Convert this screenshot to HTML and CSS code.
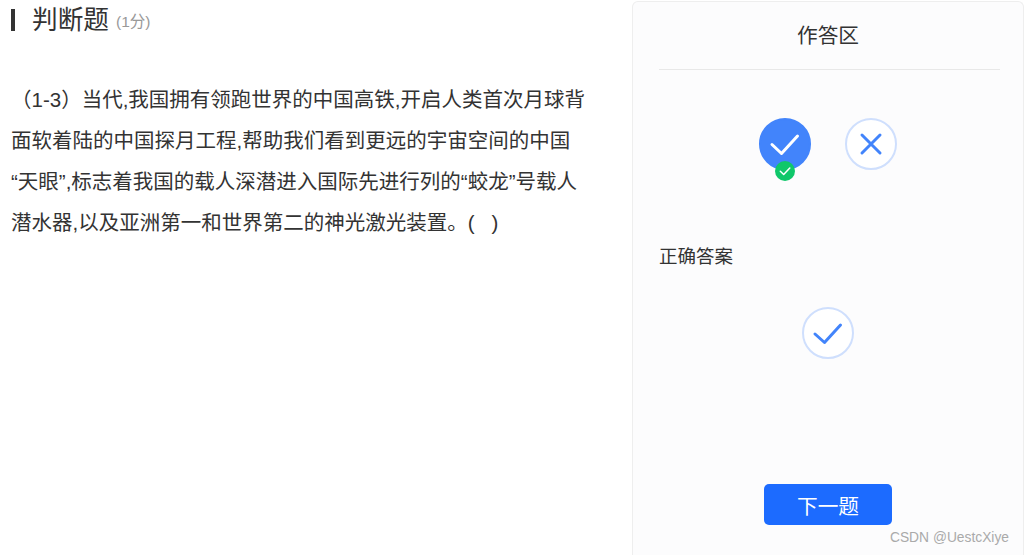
FILE: index.html
```html
<!DOCTYPE html>
<html lang="zh-CN">
<head>
<meta charset="utf-8">
<title>判断题</title>
<link rel="stylesheet" href="styles.css">
</head>
<body>
<div class="page">
  <main class="question">
    <h1 class="heading"><span class="heading-title">判断题</span><span class="heading-score">(1分)</span></h1>
    <p class="stem">（1-3）当代,我国拥有领跑世界的中国高铁,开启人类首次月球背面软着陆的中国探月工程,帮助我们看到更远的宇宙空间的中国“天眼”,标志着我国的载人深潜进入国际先进行列的“蛟龙”号载人潜水器,以及亚洲第一和世界第二的神光激光装置。(&nbsp;&nbsp;&nbsp;)</p>
  </main>
  <aside class="panel">
    <h2 class="panel-title">作答区</h2>
    <div class="options">
      <div class="choice choice-selected">
        <svg class="glyph" viewBox="0 0 52 52"><path d="M13 26.500L22.500 35.500L38.500 18" fill="none" stroke="#fff" stroke-width="3" stroke-linecap="round" stroke-linejoin="round"/></svg>
        <svg class="badge" viewBox="0 0 20 20"><circle cx="10" cy="10" r="10" fill="#0fc76a"/><path d="M5.300 10.300L8.700 13.500L14.800 7" fill="none" stroke="#fff" stroke-width="1.500" stroke-linecap="round" stroke-linejoin="round"/></svg>
      </div>
      <div class="choice">
        <svg class="glyph" viewBox="0 0 52 52"><path d="M17 17L35 35M35 17L17 35" fill="none" stroke="#4284fb" stroke-width="3" stroke-linecap="round"/></svg>
      </div>
    </div>
    <h3 class="answer-label">正确答案</h3>
    <div class="answer">
      <div class="choice">
        <svg class="glyph" viewBox="0 0 52 52"><path d="M13 27L22.500 35.500L38.500 18" fill="none" stroke="#4284fb" stroke-width="3" stroke-linecap="round" stroke-linejoin="round"/></svg>
      </div>
    </div>
    <div class="actions"><button class="next" type="button">下一题</button></div>
  </aside>
</div>
<div class="watermark">CSDN @UestcXiye</div>
</body>
</html>
```
FILE: styles.css
```css
* { box-sizing: border-box; }
html, body { margin: 0; height: 555px; overflow: hidden; background: #fff; }
body {
  position: relative;
  font-family: "Liberation Sans", "Noto Sans CJK SC", sans-serif;
  color: #333;
}
.page { display: flex; height: 555px; }
.question { width: 632px; padding-left: 11px; flex: none; }
.heading {
  margin: 9px 0 0;
  height: 22px;
  display: flex;
  align-items: center;
  border-left: 4px solid #333;
  padding-left: 17px;
  font-weight: 400;
  line-height: 22px;
}
.heading-title { font-size: 25.700px; color: #333; }
.heading-score { font-size: 15.500px; color: #999; margin-left: 7px; position: relative; top: 2px; }
.stem {
  margin: 48px 0 0;
  width: 585px;
  font-size: 20.500px;
  line-height: 41px;
  color: #333;
}
.panel {
  width: 392px;
  flex: none;
  margin-top: 1px;
  height: 554px;
  padding: 0 23px 0 26px;
  background: #fcfcfd;
  border: 1px solid #eee;
  border-bottom: 0;
  border-radius: 6px 6px 0 0;
  display: flex;
  flex-direction: column;
}
.panel-title {
  margin: 0;
  height: 68px;
  padding: 22px 3px 0 0;
  border-bottom: 1px solid #e8e8e8;
  text-align: center;
  font-size: 20.700px;
  font-weight: 400;
  line-height: 24px;
}
.options { display: flex; justify-content: center; gap: 34px; margin-top: 48px; padding-right: 3px; }
.choice {
  position: relative;
  width: 52px;
  height: 52px;
  border-radius: 50%;
  border: 2px solid #cfdffd;
  background: #fff;
}
.choice-selected { background: #4284fb; border-color: #4284fb; }
.glyph { position: absolute; left: -2px; top: -2px; width: 52px; height: 52px; display: block; }
.badge { position: absolute; left: 14px; top: 41px; width: 20px; height: 20px; display: block; }
.answer-label {
  margin: 75px 0 0;
  font-size: 18.500px;
  font-weight: 400;
  line-height: 24px;
}
.answer { display: flex; justify-content: center; margin-top: 38px; padding-right: 3px; }
.actions { display: flex; justify-content: center; margin-top: 125px; padding-right: 3px; }
.next {
  width: 128px;
  height: 41px;
  padding: 0;
  border: 0;
  border-radius: 5px;
  background: #1c6bff;
  color: #fff;
  font-family: inherit;
  font-size: 20.700px;
}
.watermark {
  position: absolute;
  right: 15px;
  top: 530px;
  font-size: 13.800px;
  line-height: 16px;
  color: #aaa;
}
```
